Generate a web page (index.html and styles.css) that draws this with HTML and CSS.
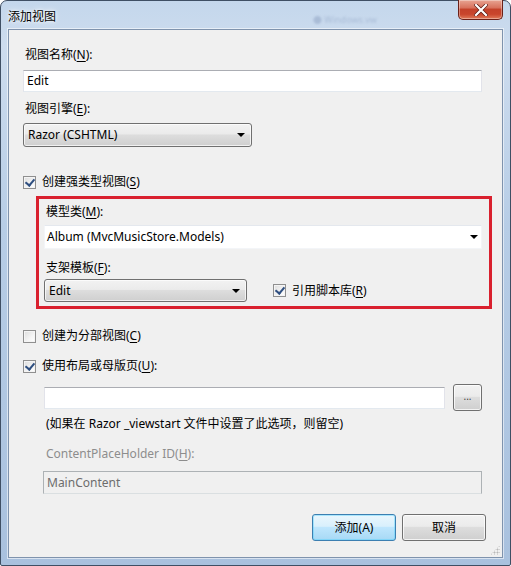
FILE: index.html
```html
<!DOCTYPE html>
<html lang="zh-CN">
<head>
<meta charset="utf-8">
<title>添加视图</title>
<link rel="stylesheet" href="styles.css">
</head>
<body>
<div class="window">
  <div class="titlebar">
    <span class="title">添加视图</span>
    <div class="ghost">● Windows.vw</div>
    <div class="close"><svg width="14" height="12" viewBox="0 0 14 12"><path d="M2 1 L12 11 M12 1 L2 11" stroke="#5a1a14" stroke-width="3.6" stroke-linecap="square"/><path d="M2 1 L12 11 M12 1 L2 11" stroke="#fff" stroke-width="2.2" stroke-linecap="square"/></svg></div>
  </div>
  <div class="client">
    <div class="label">视图名称(<u>N</u>):</div>
    <div class="textbox tb-name">Edit</div>
    <div class="label l-engine">视图引擎(<u>E</u>):</div>
    <div class="select sel-engine"><span>Razor (CSHTML)</span><i class="arrow"></i></div>
    <label class="check c-strong"><span class="box checked"></span><span>创建强类型视图(<u>S</u>)</span></label>

    <div class="redbox">
      <div class="label">模型类(<u>M</u>):</div>
      <div class="combo"><span>Album (MvcMusicStore.Models)</span><i class="arrow"></i></div>
      <div class="label l-scaffold">支架模板(<u>F</u>):</div>
      <div class="row-scaffold">
        <div class="select sel-scaffold"><span>Edit</span><i class="arrow"></i></div>
        <label class="check c-scripts"><span class="box checked"></span><span>引用脚本库(<u>R</u>)</span></label>
      </div>
    </div>

    <label class="check c-partial"><span class="box"></span><span>创建为分部视图(<u>C</u>)</span></label>
    <label class="check c-layout"><span class="box checked"></span><span>使用布局或母版页(<u>U</u>):</span></label>

    <div class="indent">
      <div class="row-layout">
        <div class="textbox tb-layout"></div>
        <div class="btn btn-browse">...</div>
      </div>
      <div class="hint">(如果在 Razor _viewstart 文件中设置了此选项，则留空)</div>
      <div class="label disabled l-cph">ContentPlaceHolder ID(<u>H</u>):</div>
      <div class="textbox tb-disabled">MainContent</div>
    </div>

    <div class="buttons">
      <div class="btn btn-default">添加(A)</div>
      <div class="btn">取消</div>
    </div>
    <div class="grip"></div>
  </div>
</div>
</body>
</html>
```
FILE: styles.css
```css
* { box-sizing: border-box; }
html, body { margin: 0; padding: 0; }
body {
  width: 511px;
  height: 566px;
  overflow: hidden;
  background: #fff;
  font-family: "Noto Sans", "Noto Sans CJK SC", sans-serif;
  font-size: 12px;
  color: #000;
}
u { text-decoration: underline; text-underline-offset: 2px; }

.window {
  width: 511px;
  height: 566px;
  border: 1px solid #3f4f64;
  border-radius: 7px 7px 2px 2px;
  background: linear-gradient(180deg, #c4d7ec 0%, #cddcee 8%, #b7cde6 40%, #a9c1de 100%);
  padding: 0 7px 7px 7px;
  display: flex;
  flex-direction: column;
  position: relative;
}
.titlebar {
  height: 28px;
  position: relative;
  display: flex;
  align-items: center;
}
.title {
  margin-left: 0px;
  margin-top: 1px;
  font-size: 12px;
  color: #000;
  text-shadow: 0 0 6px #fff, 0 0 3px #fff;
}
.ghost {
  position: absolute;
  left: 305px;
  top: 12px;
  font-size: 9px;
  color: #8b9fc0;
  opacity: 0.5;
  filter: blur(1px);
}
.close {
  position: absolute;
  right: 0px;
  top: -1px;
  width: 45px;
  height: 20px;
  border: 1px solid #6b2018;
  border-top: none;
  border-radius: 0 0 5px 5px;
  background: linear-gradient(180deg, #e8a493 0%, #d8725e 40%, #c4412a 50%, #c9452c 75%, #e07a5a 100%);
  box-shadow: inset 0 0 0 1px rgba(255,255,255,0.35);
  display: flex;
  align-items: center;
  justify-content: center;
}

.client {
  flex: 1;
  background: #f0f0f0;
  border: 1px solid #7f93ad;
  box-shadow: 0 0 0 1px rgba(255,255,255,0.55);
  padding: 17px 20px 0 14px;
  position: relative;
}

.label {
  height: 16px;
  line-height: 16px;
  padding-left: 2px;
  white-space: nowrap;
}
.label.disabled { color: #8d8d8d; }

.textbox {
  background: #fff;
  border: 1px solid #e2e3ea;
  border-top-color: #abadb3;
  border-bottom-color: #e3e9ef;
  height: 22px;
  line-height: 20px;
  padding-left: 3px;
  white-space: nowrap;
}
.tb-name { margin-top: 7px; }
.l-engine { margin-top: 9px; }

.select {
  position: relative;
  height: 24px;
  line-height: 22px;
  border: 1px solid #707070;
  border-radius: 3px;
  background: linear-gradient(180deg, #f2f2f2 0%, #ebebeb 45%, #dddddd 50%, #cfcfcf 100%);
  padding-left: 4px;
  box-shadow: inset 0 0 0 1px rgba(255,255,255,0.7);
  white-space: nowrap;
}
.arrow {
  position: absolute;
  right: 6px;
  top: 50%;
  margin-top: -2px;
  width: 0;
  height: 0;
  border-left: 4px solid transparent;
  border-right: 4px solid transparent;
  border-top: 4px solid #000;
}
.sel-engine { width: 229px; margin-top: 6px; }

.check {
  display: flex;
  align-items: center;
  height: 16px;
  line-height: 16px;
  white-space: nowrap;
}
.box {
  width: 13px;
  height: 13px;
  border: 1px solid #8f8f8f;
  background: linear-gradient(135deg, #dcdcdc 0%, #f4f4f4 60%, #ffffff 100%);
  box-shadow: inset 0 0 0 1px #f4f4f4;
  margin-right: 6px;
  position: relative;
  flex: none;
}
.box.checked::after {
  content: "";
  position: absolute;
  left: 3px;
  top: 0px;
  width: 4px;
  height: 7px;
  border: solid #2f4f80;
  border-width: 0 2px 2px 0;
  transform: rotate(40deg);
}
.c-strong { margin-top: 27px; }

.redbox {
  margin-top: 6px;
  margin-left: 13px;
  margin-right: -10px;
  border: 3px solid #d9202e;
  padding: 5px 7px 4px 5px;
}
.combo {
  position: relative;
  height: 24px;
  line-height: 22px;
  background: #fff;
  border: 1px solid #f3f5f8;
  border-top-color: #e4e8ee;
  margin-top: 5px;
  padding-left: 2px;
  white-space: nowrap;
}
.combo .arrow { right: 3px; }
.l-scaffold { margin-top: 11px; }
.row-scaffold {
  display: flex;
  align-items: center;
  margin-top: 3px;
}
.sel-scaffold { width: 203px; height: 23px; line-height: 21px; }
.c-scripts { margin-left: 26px; }

.c-partial { margin-top: 19px; }
.c-layout { margin-top: 14px; }

.indent { padding-left: 21px; }
.row-layout {
  display: flex;
  align-items: center;
  gap: 8px;
  margin-top: 10px;
  height: 27px;
}
.tb-layout { flex: 1; }
.btn {
  height: 27px;
  line-height: 25px;
  border: 1px solid #707070;
  border-radius: 3px;
  background: linear-gradient(180deg, #f2f2f2 0%, #ebebeb 45%, #dddddd 50%, #cfcfcf 100%);
  box-shadow: inset 0 0 0 1px rgba(255,255,255,0.75);
  text-align: center;
  white-space: nowrap;
}
.btn-browse {
  width: 29px;
  font-size: 10px;
  color: #444;
  line-height: 23px;
}
.hint {
  margin-top: 5px;
  height: 16px;
  line-height: 16px;
  padding-left: 2px;
  white-space: nowrap;
}
.l-cph { margin-top: 14px; }
.tb-disabled {
  margin-top: 9px;
  margin-left: -1px;
  height: 23px;
  background: #f0f0f0;
  border: 1px solid #adb2b5;
  border-top-color: #adb2b5;
  border-bottom-color: #dadfe1;
  color: #6d6d6d;
  line-height: 21px;
}

.buttons {
  display: flex;
  justify-content: flex-end;
  gap: 6px;
  margin-top: 20px;
  margin-right: -4px;
}
.buttons .btn { width: 84px; }
.btn-default {
  border-color: #3c7fb1;
  background: linear-gradient(180deg, #eaf6fd 0%, #d9f0fc 45%, #bee6fd 50%, #a7d9f5 100%);
  box-shadow: inset 0 0 0 1px #48d0fc66;
}
.grip {
  position: absolute;
  right: 2px;
  bottom: 2px;
  width: 10px;
  height: 10px;
  background:
    radial-gradient(circle, #b8b8b8 0.8px, transparent 1.2px) 0 0 / 3px 3px;
  clip-path: polygon(100% 0, 100% 100%, 0 100%);
}
```
